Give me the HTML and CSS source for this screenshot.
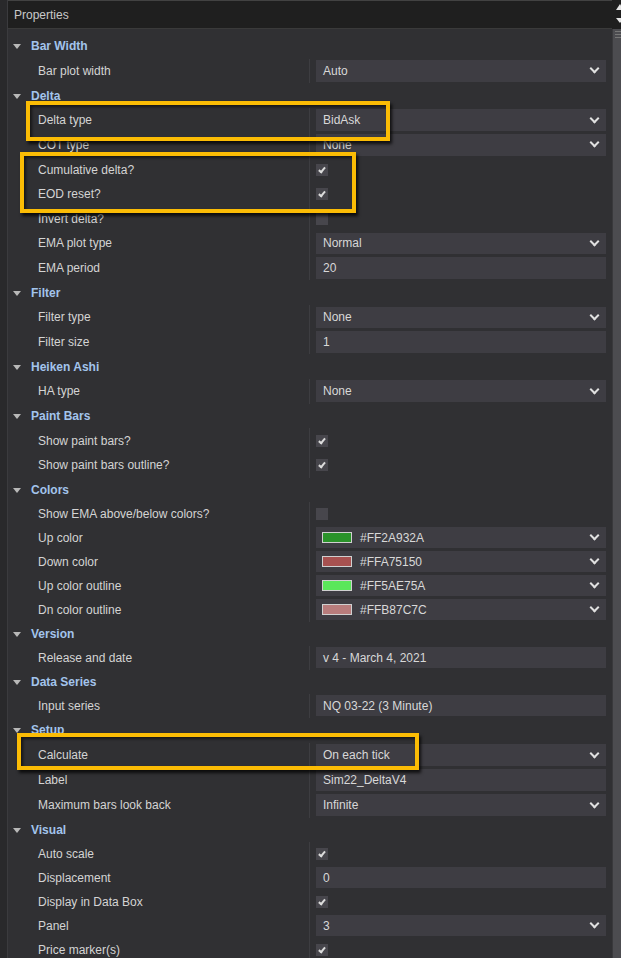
FILE: index.html
```html
<!DOCTYPE html>
<html lang="en">
<head>
  <meta charset="UTF-8">
  <title>Properties</title>
  <link rel="stylesheet" href="styles.css">
</head>
<body>
  <div class="window">
    <div class="panel">
      <div class="title">Properties</div>
      <div class="grid">
        <section class="cat roomy">
          <div class="cat-head">Bar Width</div>
          <div class="prop"><span class="name">Bar plot width</span><span class="value"><span class="box combo">Auto</span></span></div>
        </section>

        <section class="cat roomy">
          <div class="cat-head">Delta</div>
          <div class="prop"><span class="name">Delta type</span><span class="value"><span class="box combo">BidAsk</span></span></div>
          <div class="prop"><span class="name">COT type</span><span class="value"><span class="box combo">None</span></span></div>
          <div class="prop"><span class="name">Cumulative delta?</span><span class="value"><span class="check on"></span></span></div>
          <div class="prop"><span class="name">EOD reset?</span><span class="value"><span class="check on"></span></span></div>
          <div class="prop"><span class="name">Invert delta?</span><span class="value"><span class="check"></span></span></div>
          <div class="prop"><span class="name">EMA plot type</span><span class="value"><span class="box combo">Normal</span></span></div>
          <div class="prop"><span class="name">EMA period</span><span class="value"><span class="box">20</span></span></div>
        </section>

        <section class="cat roomy">
          <div class="cat-head">Filter</div>
          <div class="prop"><span class="name">Filter type</span><span class="value"><span class="box combo">None</span></span></div>
          <div class="prop"><span class="name">Filter size</span><span class="value"><span class="box">1</span></span></div>
        </section>

        <section class="cat roomy">
          <div class="cat-head">Heiken Ashi</div>
          <div class="prop"><span class="name">HA type</span><span class="value"><span class="box combo">None</span></span></div>
        </section>

        <section class="cat roomy">
          <div class="cat-head">Paint Bars</div>
          <div class="prop"><span class="name">Show paint bars?</span><span class="value"><span class="check on"></span></span></div>
          <div class="prop"><span class="name">Show paint bars outline?</span><span class="value"><span class="check on"></span></span></div>
        </section>

        <section class="cat">
          <div class="cat-head">Colors</div>
          <div class="prop"><span class="name">Show EMA above/below colors?</span><span class="value"><span class="check"></span></span></div>
          <div class="prop"><span class="name">Up color</span><span class="value"><span class="box combo"><span class="swatch" style="background:#2a932a"></span>#FF2A932A</span></span></div>
          <div class="prop"><span class="name">Down color</span><span class="value"><span class="box combo"><span class="swatch" style="background:#a75150"></span>#FFA75150</span></span></div>
          <div class="prop"><span class="name">Up color outline</span><span class="value"><span class="box combo"><span class="swatch" style="background:#5ae75a"></span>#FF5AE75A</span></span></div>
          <div class="prop"><span class="name">Dn color outline</span><span class="value"><span class="box combo"><span class="swatch" style="background:#b87c7c"></span>#FFB87C7C</span></span></div>
        </section>

        <section class="cat">
          <div class="cat-head">Version</div>
          <div class="prop"><span class="name">Release and date</span><span class="value"><span class="box">v 4 - March 4, 2021</span></span></div>
        </section>

        <section class="cat">
          <div class="cat-head">Data Series</div>
          <div class="prop"><span class="name">Input series</span><span class="value"><span class="box">NQ 03-22 (3 Minute)</span></span></div>
        </section>

        <section class="cat tall">
          <div class="cat-head">Setup</div>
          <div class="prop"><span class="name">Calculate</span><span class="value"><span class="box combo">On each tick</span></span></div>
          <div class="prop"><span class="name">Label</span><span class="value"><span class="box">Sim22_DeltaV4</span></span></div>
          <div class="prop"><span class="name">Maximum bars look back</span><span class="value"><span class="box combo">Infinite</span></span></div>
        </section>

        <section class="cat">
          <div class="cat-head">Visual</div>
          <div class="prop"><span class="name">Auto scale</span><span class="value"><span class="check on"></span></span></div>
          <div class="prop"><span class="name">Displacement</span><span class="value"><span class="box">0</span></span></div>
          <div class="prop"><span class="name">Display in Data Box</span><span class="value"><span class="check on"></span></span></div>
          <div class="prop"><span class="name">Panel</span><span class="value"><span class="box combo">3</span></span></div>
          <div class="prop"><span class="name">Price marker(s)</span><span class="value"><span class="check on"></span></span></div>
        </section>
      </div>
    </div>

    <div class="scroll">
      <div class="scroll-top">
        <svg width="9" height="29" viewBox="0 0 9 29">
          <polygon points="8,4 4,10 12,10" fill="#e6e6e6"/>
          <polygon points="4,18 12,18 8,23" fill="#e6e6e6"/>
        </svg>
      </div>
      <div class="thumb"><span class="grip"></span></div>
    </div>

    <!-- highlight frames drawn over the grid -->
    <div class="mark mark-delta"></div>
    <div class="mark mark-cum"></div>
    <div class="mark mark-calc"></div>
  </div>
</body>
</html>
```

FILE: styles.css
```css
body {
  margin: 0;
  background: #29292b;
  font-family: "Liberation Sans", Arial, sans-serif;
  font-size: 12px;
  color: #d2d2d2;
}
.window {
  position: relative;
  display: flex;
  height: 958px;
  overflow: hidden;
  padding-left: 7px;
}
.panel {
  flex: 1;
  display: flex;
  flex-direction: column;
  border-left: 1px solid #3b3b3e;
  background: #303033;
}
.title {
  flex-shrink: 0;
  height: 27px;
  display: flex;
  align-items: center;
  padding-left: 6px;
  background: #1f1f1f;
  border-top: 1px solid #424242;
  border-bottom: 1px solid #3a3a3a;
  color: #c9c9c9;
}
.grid {
  flex-shrink: 0;
  padding-top: 5px;
}
.cat {
  --rh: 24px;
}
.cat.roomy {
  --rh: 24.65px;
}
.cat.tall {
  --rh: 25px;
}
.cat-head, .prop {
  height: var(--rh);
  display: flex;
  align-items: center;
}
.cat-head {
  padding-left: 5px;
  font-weight: bold;
  color: #a3c4ec;
}
.cat-head::before {
  content: '';
  border-left: 4.5px solid transparent;
  border-right: 4.5px solid transparent;
  border-top: 5px solid #b8b8b8;
  margin-right: 10px;
  margin-top: 1px;
}
.name {
  width: 301px;
  box-sizing: border-box;
  padding-left: 30px;
  color: #d4d4d4;
  white-space: nowrap;
}
.value {
  flex: 1;
  align-self: stretch;
  display: flex;
  align-items: center;
  border-left: 1px solid #3d3d41;
  padding: 0 6px;
}
.box {
  flex: 1;
  height: calc(var(--rh) - 3px);
  display: flex;
  align-items: center;
  padding-left: 7px;
  background: #3e3d43;
  color: #d8d8d8;
}
.combo::after {
  content: '';
  width: 5px;
  height: 5px;
  margin-left: auto;
  margin-right: 8px;
  margin-top: -4px;
  border-right: 2px solid #e0e0e0;
  border-bottom: 2px solid #e0e0e0;
  transform: rotate(45deg);
}
.swatch {
  width: 28px;
  height: 9px;
  border: 1px solid #d0d0d0;
  margin-left: -1px;
  margin-right: 8px;
}
.check {
  position: relative;
  width: 12px;
  height: 12px;
  background: #47464c;
}
.check.on::after {
  content: '';
  position: absolute;
  left: 4px;
  top: 2px;
  width: 2px;
  height: 5px;
  border-right: 2px solid #dcdcdc;
  border-bottom: 2px solid #dcdcdc;
  transform: rotate(40deg);
}
.scroll {
  width: 9px;
  display: flex;
  flex-direction: column;
}
.scroll-top {
  height: 29px;
  flex-shrink: 0;
  background: #1f1f1f;
}
.scroll-top svg {
  display: block;
}
.thumb {
  flex: 1;
  position: relative;
  background: #4c4c50;
  border-left: 1px solid #39393c;
}
.grip {
  position: absolute;
  left: 2px;
  top: 2px;
  width: 6px;
  height: 5px;
  border-top: 1px solid #777;
  border-bottom: 1px solid #777;
}
.grip::after {
  content: '';
  position: absolute;
  left: 0;
  right: 0;
  top: 2px;
  border-top: 1px solid #777;
}
.mark {
  position: absolute;
  box-sizing: border-box;
  border: 4px solid #fbbc05;
  box-shadow: 2px 3px 3px rgba(0, 0, 0, 0.75), inset 2px 2px 3px rgba(0, 0, 0, 0.55);
}
.mark-delta {
  left: 26px;
  top: 101px;
  width: 364px;
  height: 40px;
}
.mark-cum {
  left: 20px;
  top: 152px;
  width: 336px;
  height: 61px;
}
.mark-calc {
  left: 17px;
  top: 733px;
  width: 402px;
  height: 37px;
}
```
